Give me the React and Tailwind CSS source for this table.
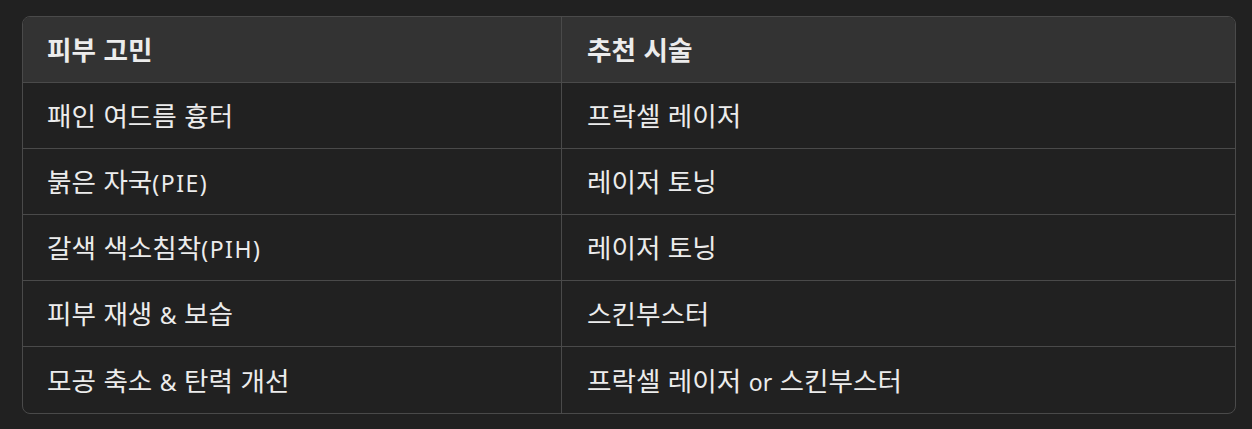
const HANGUL = /([\uAC00-\uD7A3\u3131-\u318E ]+)|([^\uAC00-\uD7A3\u3131-\u318E ]+)/g;

function Mixed({ text }) {
  const parts = [];
  let m;
  let k = 0;
  HANGUL.lastIndex = 0;
  while ((m = HANGUL.exec(text)) !== null) {
    if (m[1]) {
      parts.push(
        <span key={k++} className="text-[26.6px]">
          {m[1]}
        </span>
      );
    } else {
      const paren = /[()]/.test(m[2]);
      parts.push(
        <span
          key={k++}
          className={`text-[23px] ${paren ? "tracking-[1.5px]" : ""}`}
          style={{ fontFamily: '"Noto Sans", sans-serif' }}
        >
          {m[2]}
        </span>
      );
    }
  }
  return <span className="whitespace-pre leading-none [word-spacing:1.5px]">{parts}</span>;
}

export default function App() {
  const rows = [
    ["패인 여드름 흉터", "프락셀 레이저"],
    ["붉은 자국(PIE)", "레이저 토닝"],
    ["갈색 색소침착(PIH)", "레이저 토닝"],
    ["피부 재생 & 보습", "스킨부스터"],
    ["모공 축소 & 탄력 개선", "프락셀 레이저 or 스킨부스터"],
  ];
  return (
    <div
      className="w-[1252px] h-[429px] bg-[#212121] pt-[16px] px-[22px] text-[#ececec]"
      style={{ fontFamily: '"Noto Sans CJK KR", "Noto Sans", sans-serif' }}
    >
      <div className="w-[1214px] border border-[#4a4a4a] rounded-[8px] overflow-hidden">
        <div className="flex h-[66px] bg-[#333333] border-b border-[#4a4a4a] font-semibold">
          <div className="w-[539px] border-r border-[#4a4a4a] pl-[24px] flex items-center">
            <Mixed text="피부 고민" />
          </div>
          <div className="flex-1 pl-[25px] flex items-center">
            <Mixed text="추천 시술" />
          </div>
        </div>
        {rows.map((r, i) => (
          <div
            key={i}
            className={`flex h-[66px] ${i < rows.length - 1 ? "border-b border-[#4a4a4a]" : ""}`}
          >
            <div className="w-[539px] border-r border-[#4a4a4a] pl-[24px] flex items-center">
              <Mixed text={r[0]} />
            </div>
            <div className="flex-1 pl-[25px] flex items-center">
              <Mixed text={r[1]} />
            </div>
          </div>
        ))}
      </div>
    </div>
  );
}
